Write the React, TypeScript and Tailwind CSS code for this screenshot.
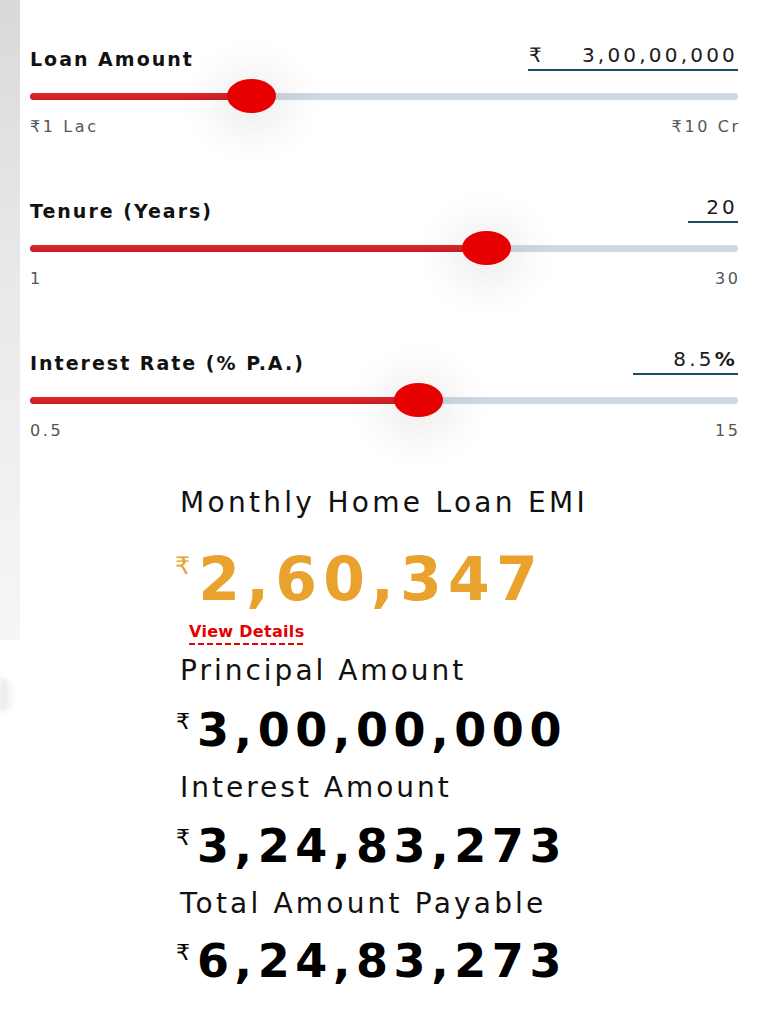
import React from "react";

type SliderDef = {
  label: string;
  prefix?: string;
  value: string;
  suffix?: string;
  inputClass: string;
  pct: number;
  min: string;
  max: string;
};

const sliders: SliderDef[] = [
  {
    label: "Loan Amount",
    prefix: "₹",
    value: "3,00,00,000",
    inputClass: "w-[210px]",
    pct: (300 - 1) / (1000 - 1),
    min: "₹1 Lac",
    max: "₹10 Cr",
  },
  {
    label: "Tenure (Years)",
    value: "20",
    inputClass: "w-[50px]",
    pct: (20 - 1) / 29,
    min: "1",
    max: "30",
  },
  {
    label: "Interest Rate (% P.A.)",
    value: "8.5",
    suffix: "%",
    inputClass: "w-[105px]",
    pct: (8.5 - 0.5) / 14.5,
    min: "0.5",
    max: "15",
  },
];

const TRACK_W = 708;
const THUMB_W = 49;

function Slider({ s }: { s: SliderDef }) {
  const center = THUMB_W / 2 + s.pct * (TRACK_W - THUMB_W);
  return (
    <div>
      <div className="flex items-end justify-between">
        <span className="text-[19px] leading-[24px] font-bold tracking-[2px] text-[#111]">
          {s.label}
        </span>
        <div
          className={`flex items-center border-b-2 border-[#1f4b66] pb-[2px] text-[20px] leading-[24px] text-[#1a1a1a] ${s.inputClass}`}
        >
          {s.prefix && <span className="pl-[1px]">{s.prefix}</span>}
          <span className="ml-auto tracking-[3.2px]">
            {s.value}
            {s.suffix && <span className="font-bold">{s.suffix}</span>}
          </span>
        </div>
      </div>
      <div className="relative mt-[8px] flex h-[34px] items-center">
        <div className="h-[7px] w-full rounded-full bg-[#cfd8e0]">
          <div
            className="h-full rounded-full bg-[linear-gradient(to_bottom,#e2262d,#c81e25)]"
            style={{ width: `${center}px` }}
          />
        </div>
        <div
          className="absolute top-0 h-[34px] w-[49px] rounded-[50%] bg-[#e60000] shadow-[0_6px_40px_16px_rgba(0,0,0,0.07)]"
          style={{ left: `${center - THUMB_W / 2}px` }}
        />
      </div>
      <div className="mt-[4px] flex justify-between text-[16px] leading-[20px] tracking-[2.6px] text-[#555]">
        <span>{s.min}</span>
        <span className="mr-[-2.6px]">{s.max}</span>
      </div>
    </div>
  );
}

function Amount({ value }: { value: string }) {
  return (
    <div className="ml-[-4px] flex items-start text-black">
      <span className="mt-[7px] text-[22px] leading-[22px]">₹</span>
      <span className="ml-[7px] text-[46px] leading-[52px] font-bold tracking-[5.6px]">
        {value}
      </span>
    </div>
  );
}

export default function App() {
  return (
    <div className="flex min-h-[1024px] w-[768px] bg-white font-[family-name:'DejaVu_Sans',sans-serif]">
      <div className="flex w-[20px] shrink-0 flex-col">
        <div className="h-[640px] bg-[linear-gradient(to_bottom,#d9d9d9,#e8e8e8_40%,#f6f6f6)]" />
        <div className="mt-[38px] h-[34px] w-[16px] rounded-r-full bg-[linear-gradient(to_right,#e6e6e6,#ffffff)] blur-[2px]" />
      </div>
      <div className="flex-1 pl-[10px] pr-[30px] pt-[43px]">
        <div className="flex flex-col gap-[58px]">
          {sliders.map((s) => (
            <Slider key={s.label} s={s} />
          ))}
        </div>

        <div className="mt-[45px] pl-[150px]">
          <div className="text-[28px] leading-[34px] tracking-[3.3px] text-[#111]">
            Monthly Home Loan EMI
          </div>
          <div className="mt-[27px] ml-[-5px] flex items-start text-[#e8a22d]">
            <span className="mt-[7px] text-[24px] leading-[24px]">₹</span>
            <span className="ml-[8px] text-[60px] leading-[64px] font-bold tracking-[6.2px]">
              2,60,347
            </span>
          </div>
          <div className="mt-[11px] ml-[9px] flex w-fit flex-col">
            <span className="text-[16px] leading-[20px] font-bold tracking-[0.3px] text-[#e60000]">
              View Details
            </span>
            <div className="mt-[1px] h-[2px] bg-[repeating-linear-gradient(to_right,#e60000_0_6px,transparent_6px_9px)]" />
          </div>

          <div className="mt-[9px] text-[28px] leading-[34px] tracking-[3px] text-[#111]">
            Principal Amount
          </div>
          <div className="mt-[16px]">
            <Amount value="3,00,00,000" />
          </div>
          <div className="mt-[15px] text-[28px] leading-[34px] tracking-[3px] text-[#111]">
            Interest Amount
          </div>
          <div className="mt-[15px]">
            <Amount value="3,24,83,273" />
          </div>
          <div className="mt-[15px] text-[28px] leading-[34px] tracking-[3.2px] text-[#111]">
            Total Amount Payable
          </div>
          <div className="mt-[14px]">
            <Amount value="6,24,83,273" />
          </div>
        </div>
      </div>
    </div>
  );
}
